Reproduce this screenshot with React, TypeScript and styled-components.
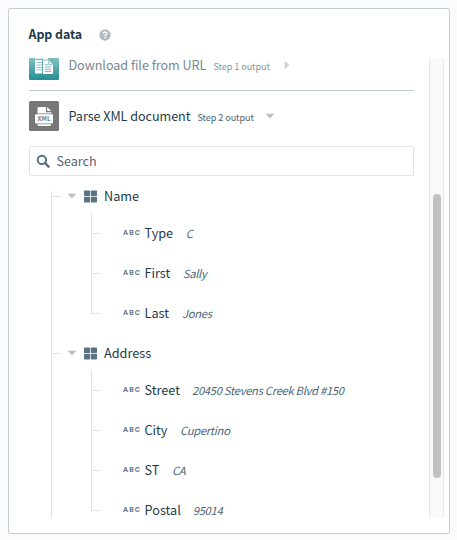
import React from "react";
import styled, { createGlobalStyle } from "styled-components";

const GlobalStyle = createGlobalStyle`
  * { box-sizing: border-box; }
  body {
    margin: 0;
    background: #f9fbfc;
    font-family: "Noto Sans CJK SC", "Open Sans", sans-serif;
    color: #1f3b47;
  }
`;

const Page = styled.div`
  height: 540px;
  padding: 8px 7px 6px 8px;
  overflow: hidden;
`;

const Panel = styled.section`
  height: 526px;
  border: 1px solid #c3ced6;
  border-radius: 2px;
  background: #fff;
  padding: 0 5px 0 20px;
  overflow: hidden;
`;

const PanelHeader = styled.header`
  display: flex;
  align-items: center;
  height: 49px;
  padding-top: 3px;
`;

const Title = styled.h1`
  margin: -2px 0 0 -0.5px;
  width: 70.5px;
  font-size: 12.4px;
  line-height: 20px;
  font-weight: 700;
  letter-spacing: -0.05px;
  white-space: nowrap;
`;

const ScrollArea = styled.div`
  display: flex;
  justify-content: space-between;
  height: 460px;
  overflow: hidden;
`;

const Content = styled.div`
  width: 385px;
`;

const Track = styled.div`
  width: 15px;
  height: 460px;
  padding: 136px 2px 0 3px;
  background: #f9f9f9;
  border: solid #e6e6e6;
  border-width: 0 1px;
`;

const Thumb = styled.div`
  width: 8px;
  height: 284px;
  border-radius: 4px;
  background: #c1c1c1;
`;

const Step = styled.div<{ $muted?: boolean }>`
  display: flex;
  align-items: center;
  height: 30px;
  margin-top: ${(p) => (p.$muted ? "-8px" : "10px")};
  color: ${(p) => (p.$muted ? "#788991" : "#1f3b47")};
  white-space: nowrap;
  svg { flex: none; }
`;

const StepName = styled.span<{ $w: number }>`
  width: ${(p) => p.$w}px;
  margin-left: 9.5px;
  font-size: 12.6px;
  line-height: 20px;
  letter-spacing: -0.04px;
`;

const StepNote = styled.span<{ $muted?: boolean }>`
  width: 56px;
  margin: 2px 11px 0 7px;
  font-size: 9.1px;
  line-height: 16px;
  letter-spacing: -0.08px;
  color: ${(p) => (p.$muted ? "#87969e" : "#4b6370")};
`;

const Divider = styled.div`
  height: 1px;
  margin-top: 10px;
  background: #c0cdd6;
`;

const SearchBox = styled.div`
  display: flex;
  align-items: center;
  gap: 6.5px;
  height: 30px;
  margin-top: 15px;
  padding-left: 6px;
  border: 1px solid #e2e3e6;
  border-radius: 2px;
  color: #5d666b;
  font-size: 12.6px;
  line-height: 20px;
`;

const Tree = styled.div`
  margin-left: 22px;
  background: linear-gradient(#e1e2e5, #e1e2e5) 0 15px / 1px 100% no-repeat;
`;

const GroupHeader = styled.div`
  display: flex;
  align-items: center;
  height: 37px;
  padding-top: 3px;
  font-size: 12.7px;
  line-height: 20px;
`;

const Tick = styled.span`
  width: 10px;
  height: 1px;
  margin-right: 6px;
  background: #e1e2e5;
`;

const GroupIcon = styled.span`
  display: flex;
  margin: 0 7px 0 7px;
`;

const Leaf = styled.div`
  display: flex;
  align-items: center;
  height: 40px;
  padding-left: 40px;
  white-space: nowrap;
`;

const Elbow = styled.span<{ $last: boolean }>`
  width: 10px;
  height: 40px;
  margin-right: 22px;
  background:
    linear-gradient(#e1e2e5, #e1e2e5) 0 0 / 1px ${(p) => (p.$last ? "21px" : "40px")} no-repeat,
    linear-gradient(#e1e2e5, #e1e2e5) 0 20px / 10px 1px no-repeat;
`;

const TypeTag = styled.span`
  width: 21.5px;
  font-family: Inter, sans-serif;
  font-size: 6.8px;
  line-height: 10px;
  letter-spacing: 1.1px;
  font-weight: 700;
  color: #5d7784;
`;

const LeafName = styled.span`
  font-size: 12.7px;
  line-height: 20px;
`;

const LeafValue = styled.em<{ $gap: number }>`
  margin: 0 0 1px ${(p) => p.$gap}px;
  font-size: 11.2px;
  line-height: 18px;
  letter-spacing: -0.28px;
  color: #4d6674;
`;

const HelpIcon = () => (
  <svg width="12" height="12" viewBox="0 0 12 12">
    <circle cx="6" cy="6" r="5.7" fill="#b1bcc4" />
    <path d="M4.2 4.5Q4.4 2.9 6.1 2.9Q7.8 3 7.8 4.4Q7.8 5.2 6.9 5.7Q6.1 6.1 6.1 6.9" fill="none" stroke="#fff" strokeWidth="1.5" />
    <path d="M5.3 7.8h1.6v1.5H5.3z" fill="#fff" />
  </svg>
);

const FilesIcon = () => (
  <svg width="30" height="30" viewBox="0 0 30 30">
    <defs>
      <linearGradient id="teal" x1="0" y1="0" x2="0" y2="1">
        <stop offset="0" stopColor="#a0d3d5" />
        <stop offset=".3" stopColor="#7dbdc0" />
        <stop offset="1" stopColor="#238f95" />
      </linearGradient>
    </defs>
    <rect width="30" height="30" rx="1.5" fill="url(#teal)" />
    <path d="M6 6.5h7v2.2H6zM14 6.5h5v3h-5zM6 10h7v13.5H6z" fill="#fff" />
    <path d="M7.5 12.5H13M7.5 15H13M7.5 17.5H13M7.5 20H13" stroke="#79bbbe" strokeWidth=".8" />
    <path d="M14 10.5h6l4 4v9.5H14z" fill="#fff" />
    <path d="M13.5 10v14M19.8 11v3.8h3.8M16 14.5h2.5M16 17h6M16 19.3h6M16 21.5h6" fill="none" stroke="#5aabaf" strokeWidth=".8" />
  </svg>
);

const XmlIcon = () => (
  <svg width="30" height="30" viewBox="0 0 30 30">
    <rect width="30" height="30" rx="1.5" fill="#777" />
    <path d="M8.5 12.5V7.2Q8.5 6 9.7 6H17v5.2h5.5v1.3z" fill="#fff" />
    <path d="M18.2 6l4 4h-4z" fill="#fff" />
    <rect x="6" y="13.3" width="18" height="9.2" rx="1" fill="#fff" />
    <path d="M8.5 23.2h13.5v.6q0 1.1-1 1.1H9.7q-1.2 0-1.2-1.1z" fill="#fff" />
    <text x="15.1" y="20.2" textAnchor="middle" textLength="13" lengthAdjust="spacingAndGlyphs" fontFamily="Noto Sans CJK SC, sans-serif" fontSize="5.8" fontWeight="700" fill="#777">XML</text>
  </svg>
);

const Caret = ({ right = false }: { right?: boolean }) => (
  <svg width="10" height="10" viewBox="0 0 10 10">
    <path d={right ? "M3.6 .7v8.6L8.6 5z" : "M.6 2.8h8.8L5 7.4z"} fill={right ? "#d2d4d5" : "#bdc0c2"} />
  </svg>
);

const SearchIcon = () => (
  <svg width="14" height="14" viewBox="0 0 14 14" fill="none" stroke="#557080">
    <circle cx="5.9" cy="5.9" r="4.2" strokeWidth="2" />
    <path d="M9 9l3.6 3.6" strokeWidth="2.4" strokeLinecap="round" />
  </svg>
);

const GridIcon = () => (
  <svg width="13" height="13" viewBox="0 0 13 13" fill="#5a7380">
    <rect y=".5" width="6.1" height="5.5" rx=".7" />
    <rect x="6.9" y=".5" width="6.1" height="5.5" rx=".7" />
    <rect y="6.8" width="6.1" height="5.7" rx=".7" />
    <rect x="6.9" y="6.8" width="6.1" height="5.7" rx=".7" />
  </svg>
);

type Field = { name: string; value: string; gap: number };

const groups: { title: string; fields: Field[] }[] = [
  {
    title: "Name",
    fields: [
      { name: "Type", value: "C", gap: 12.5 },
      { name: "First", value: "Sally", gap: 12.5 },
      { name: "Last", value: "Jones", gap: 13 },
    ],
  },
  {
    title: "Address",
    fields: [
      { name: "Street", value: "20450 Stevens Creek Blvd #150", gap: 12 },
      { name: "City", value: "Cupertino", gap: 12.5 },
      { name: "ST", value: "CA", gap: 12.5 },
      { name: "Postal", value: "95014", gap: 12 },
    ],
  },
];

export default function App() {
  return (
    <Page>
      <GlobalStyle />
      <Panel>
        <PanelHeader>
          <Title>App data</Title>
          <HelpIcon />
        </PanelHeader>
        <ScrollArea>
          <Content>
            <Step $muted>
              <FilesIcon />
              <StepName $w={138}>Download file from URL</StepName>
              <StepNote $muted>Step 1 output</StepNote>
              <Caret right />
            </Step>
            <Divider />
            <Step>
              <XmlIcon />
              <StepName $w={122}>Parse XML document</StepName>
              <StepNote>Step 2 output</StepNote>
              <Caret />
            </Step>
            <SearchBox>
              <SearchIcon />
              <span>Search</span>
            </SearchBox>
            <Tree>
              {groups.map((group) => (
                <div key={group.title}>
                  <GroupHeader>
                    <Tick />
                    <Caret />
                    <GroupIcon><GridIcon /></GroupIcon>
                    {group.title}
                  </GroupHeader>
                  {group.fields.map((field, i) => (
                    <Leaf key={field.name}>
                      <Elbow $last={i === group.fields.length - 1} />
                      <TypeTag>ABC</TypeTag>
                      <LeafName>{field.name}</LeafName>
                      <LeafValue $gap={field.gap}>{field.value}</LeafValue>
                    </Leaf>
                  ))}
                </div>
              ))}
            </Tree>
          </Content>
          <Track><Thumb /></Track>
        </ScrollArea>
      </Panel>
    </Page>
  );
}
